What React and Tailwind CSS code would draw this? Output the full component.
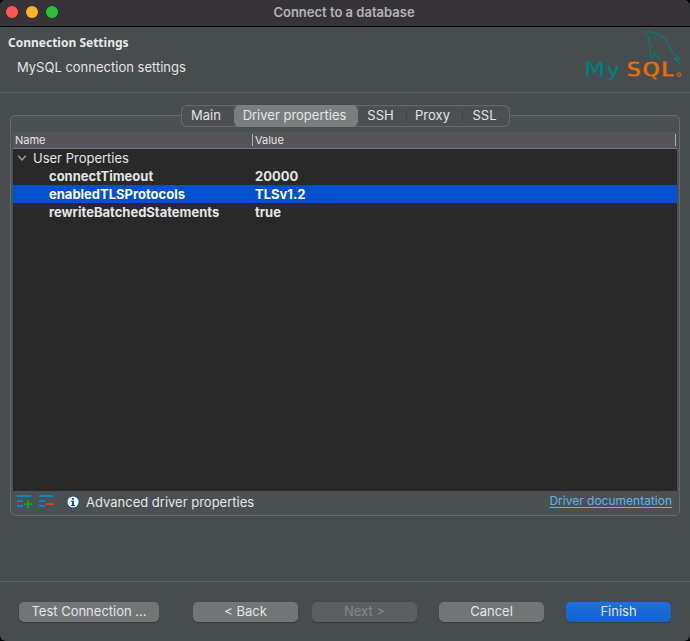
const TABS = [
  { label: "Main", size: "w-[53px]" },
  { label: "Driver properties", size: "w-[124px]", active: true },
  { label: "SSH", size: "w-12" },
  { label: "Proxy", size: "w-14", divider: true },
  { label: "SSL", size: "w-12", divider: true },
];

const PROPERTIES = [
  { name: "connectTimeout", value: "20000" },
  { name: "enabledTLSProtocols", value: "TLSv1.2", selected: true },
  { name: "rewriteBatchedStatements", value: "true" },
];

function TitleBar() {
  return (
    <div className="flex h-[27px] shrink-0 items-center border-b border-black bg-[#373438] px-1.5 pb-0.5">
      <div className="flex gap-2">
        <button type="button" aria-label="Close" className="size-3 rounded-full bg-[#ff5550]" />
        <button type="button" aria-label="Minimize" className="size-3 rounded-full bg-[#fdb32b]" />
        <button type="button" aria-label="Zoom" className="size-3 rounded-full bg-[#26c238]" />
      </div>
      <h1 className="flex-1 pr-[54px] text-center font-semibold text-[#b5b3b6]">Connect to a database</h1>
    </div>
  );
}

function MySqlLogo() {
  return (
    <svg width="102" height="54" viewBox="-2 0 102 54" className="overflow-visible" role="img" aria-label="MySQL">
      <g className="text-[22px] font-bold [font-family:'DejaVu_Sans',sans-serif]" stroke="#474c4e" strokeWidth="0.8">
        <text x="-2" y="45" fill="#027c7b">My</text>
        <text x="40" y="45" fill="#ec6c08">SQL</text>
      </g>
      <path
        d="M60 2C59 0 61-1 63-.5C65 0 67 .5 69 1.200C71 1.500 72.500 2.200 74 3.300C76 4.300 77.500 5.300 79 7C80.500 8.700 81.500 10.500 82.300 12.500L85 18C86 20 87.500 21.500 89 23L94 27.300L88 26.500L91.500 29.500L94.500 33M60 2L60.500 3.500L63 6C63.500 8 63 10 63.300 12C63.700 13.500 65 14.500 64.700 16.500C64 19 63.500 21 64.500 23.500L66.500 26L68 20L70 23.500L73 27"
        fill="none"
        stroke="#027c7b"
        strokeWidth="1.2"
        strokeLinejoin="round"
        strokeLinecap="round"
      />
      <circle cx="68" cy="6.500" r=".8" fill="#027c7b" />
      <circle cx="93" cy="42.500" r="2" fill="none" stroke="#ec6c08" strokeWidth=".8" />
      <circle cx="93" cy="42.500" r=".7" fill="#ec6c08" />
    </svg>
  );
}

function Header() {
  return (
    <header className="flex h-[66px] shrink-0 justify-between border-b border-[#5d6264] pl-2 pr-1">
      <div className="pt-2">
        <h2 className="text-[12px] leading-4 font-bold text-[#e8e9e9] [font-family:'Noto_Sans',sans-serif]">Connection Settings</h2>
        <p className="mt-2 pl-[9px]">MySQL connection settings</p>
      </div>
      <div className="pt-[5px]"><MySqlLogo /></div>
    </header>
  );
}

function TabBar() {
  return (
    <div role="tablist" className="-mt-[11px] flex h-[22px] shrink-0 self-center rounded-md bg-[#4b5052] ring-1 ring-[#65696b] ring-inset">
      {TABS.map((tab) => (
        <button
          key={tab.label}
          type="button"
          role="tab"
          aria-selected={!!tab.active}
          className={`relative flex h-[22px] items-center justify-center whitespace-nowrap pr-0.5 pb-0.5 ${tab.size} ${tab.active ? "rounded-md bg-[#7a7e7f]" : ""}`}
        >
          {tab.divider && <span className="absolute top-[5px] left-0 h-3 w-px bg-[#3e4345]" />}
          {tab.label}
        </button>
      ))}
    </div>
  );
}

function PropertiesTable() {
  return (
    <div className="mt-[5px] flex-1 bg-[#292929]">
      <table className="w-full table-fixed border-separate border-spacing-0 text-left">
        <thead className="bg-[#56545a] text-[11px]">
          <tr>
            <th className="h-[17px] w-[239px] border-b border-[#77777b] p-0 pl-0.5 leading-4 font-normal">Name</th>
            <th className="h-[17px] border-b border-[#77777b] p-0 leading-4 font-normal">
              <div className="mr-px flex h-3 items-center border-x border-[#a9a8ab] pl-0.5">Value</div>
            </th>
          </tr>
        </thead>
        <tbody>
          <tr className="h-[18px]">
            <td colSpan={2} className="p-0">
              <button type="button" aria-expanded="true" className="flex h-[18px] items-center gap-1.5 pl-1">
                <svg width="10" height="8" viewBox="0 0 10 8" fill="none" stroke="#a0a0a0" strokeWidth="1.3" strokeLinecap="round" strokeLinejoin="round" aria-hidden="true">
                  <path d="M1.500 2 5 6l3.500-4" />
                </svg>
                User Properties
              </button>
            </td>
          </tr>
          {PROPERTIES.map((p) => (
            <tr key={p.name} aria-selected={!!p.selected} className={`h-[18px] font-bold ${p.selected ? "bg-[#0050cf] text-white" : ""}`}>
              <td className="p-0 pl-9 leading-[18px]">{p.name}</td>
              <td className="p-0 pl-[3px] leading-[18px]">{p.value}</td>
            </tr>
          ))}
        </tbody>
      </table>
    </div>
  );
}

function ListIcon({ add }) {
  return (
    <svg width="16" height="14" viewBox="0 0 16 14" aria-hidden="true">
      <path d="M0 1h14M0 6h6M0 11h6" stroke="#0d84c8" strokeWidth="2" />
      {add ? <path d="M7 9h8M11 5v8" stroke="#0aa02c" strokeWidth="2" /> : <path d="M7 9h8" stroke="#fa2d1c" strokeWidth="2" />}
    </svg>
  );
}

function TableFooter() {
  return (
    <div className="flex h-6 shrink-0 items-center justify-between pr-[5px] pb-0.5 pl-1">
      <div className="flex items-center">
        <button type="button" aria-label="Add property"><ListIcon add /></button>
        <button type="button" aria-label="Remove property" className="ml-1.5"><ListIcon /></button>
        <svg className="ml-[11px]" width="14" height="14" viewBox="0 0 14 14" aria-hidden="true">
          <circle cx="7" cy="7" r="6.200" fill="#fff" stroke="#1b5592" strokeWidth="1.300" />
          <path d="M6 3h2v1.800H6zM5 5.800h3V10h1v1H5v-1h1V6.800H5z" fill="#14508f" />
        </svg>
        <span className="ml-1.5">Advanced driver properties</span>
      </div>
      <a href="#driver-documentation" className="pb-[3px] text-[12px] text-[#5fb2e2] underline underline-offset-2">Driver documentation</a>
    </div>
  );
}

const BUTTON = "h-5 rounded-[5px] pb-0.5 text-center shadow-[0_1px_1px_rgba(0,0,0,0.25)]";

function Actions() {
  return (
    <footer className="flex h-[60px] shrink-0 items-start justify-between border-t border-[#5d6264] px-[19px] pt-5">
      <button type="button" className={`${BUTTON} w-[140px] bg-[#717576]`}>Test Connection ...</button>
      <div className="flex gap-3.5">
        <button type="button" className={`${BUTTON} w-[105px] bg-[#717576]`}>&lt; Back</button>
        <button type="button" disabled className={`${BUTTON} w-[105px] bg-[#5b5f61] text-[#85888a]`}>Next &gt;</button>
      </div>
      <div className="-ml-3 flex gap-[22px]">
        <button type="button" className={`${BUTTON} w-[105px] bg-[#717576]`}>Cancel</button>
        <button type="submit" className={`${BUTTON} w-[105px] bg-linear-to-b from-[#1a70e4] to-[#1761c8]`}>Finish</button>
      </div>
    </footer>
  );
}

export default function App() {
  return (
    <div className="bg-black">
      <div className="flex min-h-screen flex-col overflow-hidden rounded-md bg-[#474c4e] text-[13px] leading-4 text-[#e4e5e5] [font-family:Inter,'Liberation_Sans',sans-serif]">
        <TitleBar />
        <Header />
        <main className="flex flex-1 flex-col px-2.5 pt-[22px] pb-[65px]">
          <section className="flex flex-1 flex-col rounded-[5px] border border-[#64696b] bg-[#4b5153] px-0.5">
            <TabBar />
            <PropertiesTable />
            <TableFooter />
          </section>
        </main>
        <Actions />
      </div>
    </div>
  );
}
